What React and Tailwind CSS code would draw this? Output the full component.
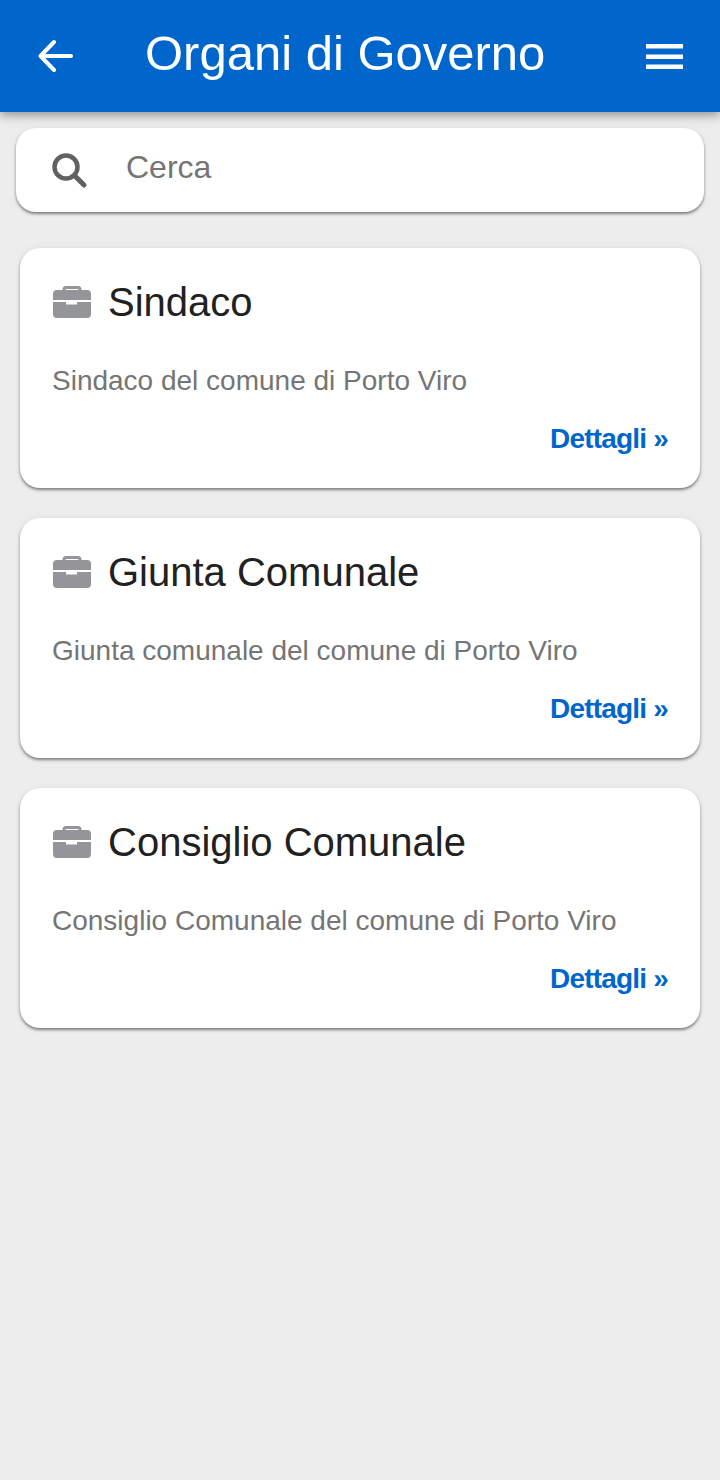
import React from "react";

const items = [
  ["Sindaco", "Sindaco del comune di Porto Viro"],
  ["Giunta Comunale", "Giunta comunale del comune di Porto Viro"],
  ["Consiglio Comunale", "Consiglio Comunale del comune di Porto Viro"],
];

function Briefcase() {
  return (
    <svg width="38" height="32" viewBox="0 0 38 32" fill="#939598" className="ml-px shrink-0">
      <path d="M11 5V3.500a2 2 0 0 1 2-2h12a2 2 0 0 1 2 2V5" fill="none" stroke="#939598" strokeWidth="3" />
      <path d="M4 4h30a4 4 0 0 1 4 4v6H0V8a4 4 0 0 1 4-4Z" />
      <path d="M0 16h13v2.500h11V16h14v12a4 4 0 0 1-4 4H4a4 4 0 0 1-4-4Z" />
    </svg>
  );
}

function Card({ title, desc }) {
  return (
    <div className="h-[240px] rounded-[20px] bg-white px-8 pt-8 shadow-[0_2px_3px_rgba(0,0,0,0.45),0_0_8px_rgba(0,0,0,0.05)]">
      <div className="flex h-[44px] items-center gap-[17px]">
        <Briefcase />
        <h2 className="text-[40px] leading-[46px] text-[#212121]">{title}</h2>
      </div>
      <p className="mt-[41px] text-[28px] leading-[32px] text-[#757575]">{desc}</p>
      <div className="mt-[25px] text-right text-[28px] leading-[34px] font-bold tracking-[-0.8px] text-[#0066cc]">
        Dettagli »
      </div>
    </div>
  );
}

export default function App() {
  return (
    <div className="min-h-[1480px] bg-[#ededed] font-['Liberation_Sans',Arial,sans-serif]">
      <header className="flex h-[112px] items-center bg-[#0066cc] pr-[37px] pb-[4px] pl-[38px] shadow-[0_3px_10px_rgba(0,0,0,0.4)]">
        <svg width="36" height="34" viewBox="0 0 36 34" fill="none" stroke="white" strokeWidth="4" strokeLinecap="round" strokeLinejoin="round" className="mt-[4px]">
          <path d="M33 17H3M16 3 2.500 17 16 31" />
        </svg>
        <h1 className="mt-[-2px] ml-[71px] flex-1 text-[49px] leading-[56px] text-white">Organi di Governo</h1>
        <svg width="37" height="25" viewBox="0 0 37 25" fill="white" className="mt-[4px]">
          <rect x="0" y="0" width="37" height="4.500" />
          <rect x="0" y="10.500" width="37" height="4.500" />
          <rect x="0" y="20.500" width="37" height="4.500" />
        </svg>
      </header>
      <div className="px-4 pt-4">
        <div className="flex h-[84px] items-center rounded-[20px] bg-white pl-[36px] shadow-[0_2px_3px_rgba(0,0,0,0.45),0_0_8px_rgba(0,0,0,0.05)]">
          <svg width="36" height="36" viewBox="0 0 36 36" fill="none" stroke="#616161" className="mt-[1px] shrink-0">
            <circle cx="14" cy="14" r="11.500" strokeWidth="4.500" />
            <path d="M23 23l9 9" strokeWidth="5" strokeLinecap="round" />
          </svg>
          <span className="ml-[38px] -translate-y-[3px] text-[32px] text-[#757575]">Cerca</span>
        </div>
      </div>
      <main className="flex flex-col gap-[30px] px-5 pt-[36px]">
        {items.map(([t, d]) => (
          <Card key={t} title={t} desc={d} />
        ))}
      </main>
    </div>
  );
}
